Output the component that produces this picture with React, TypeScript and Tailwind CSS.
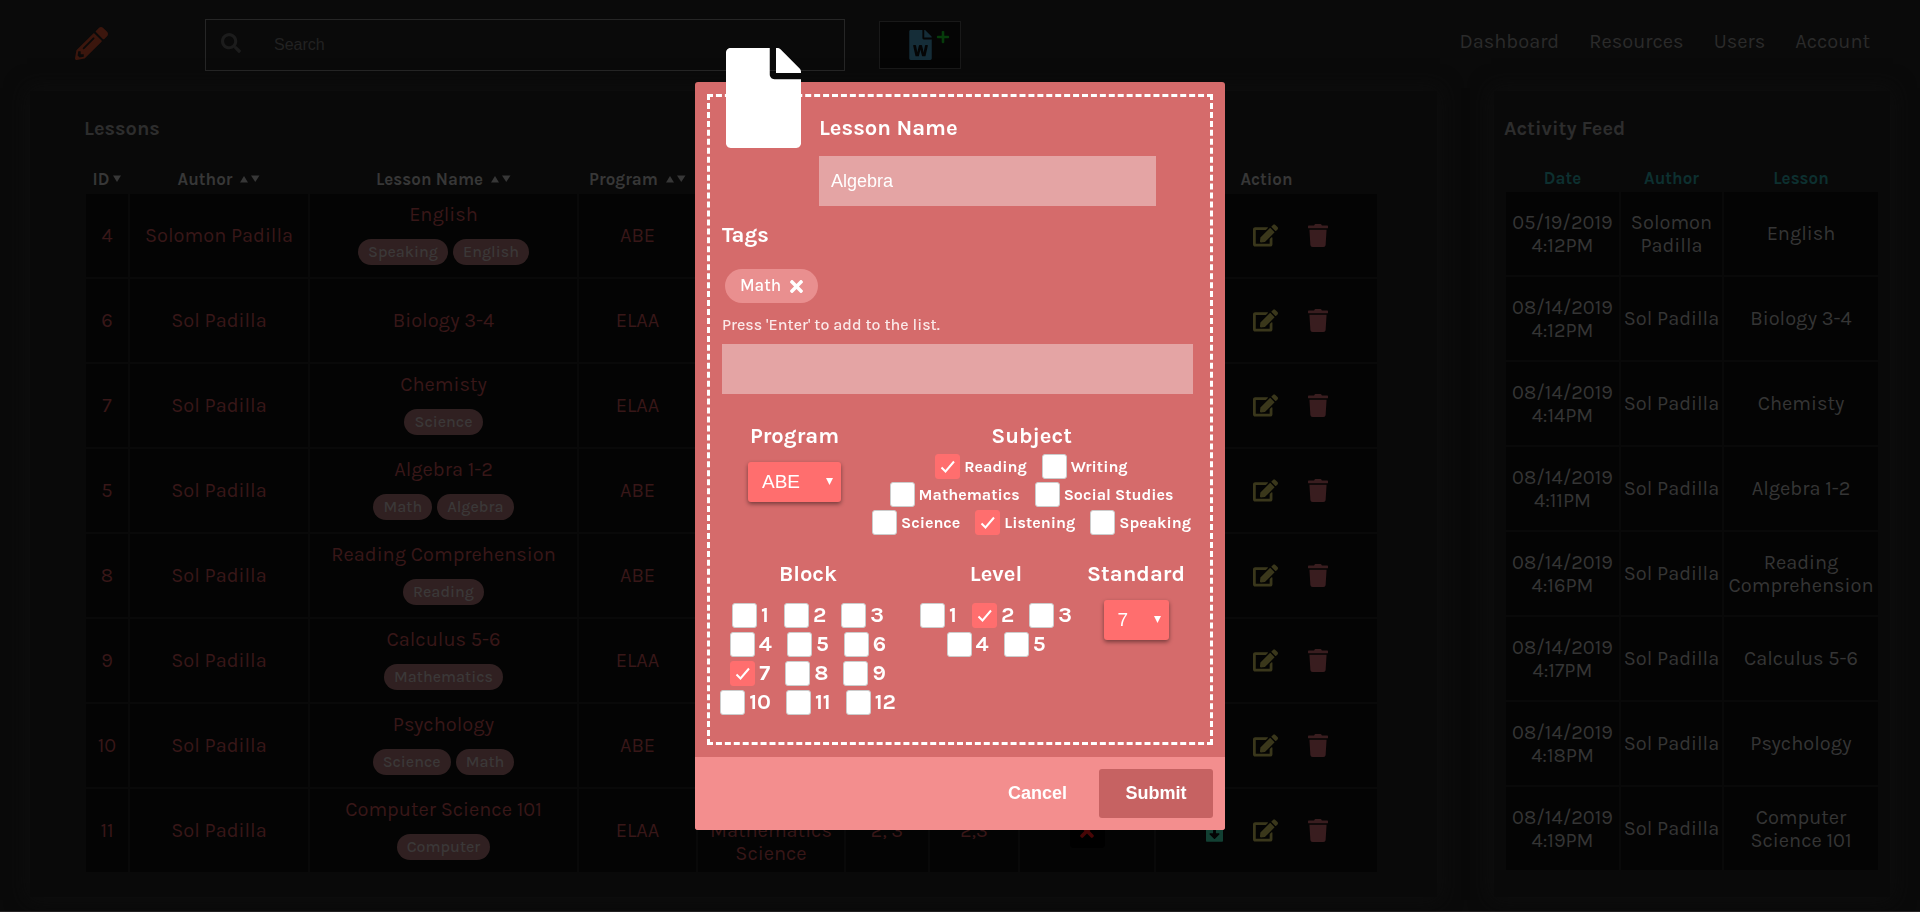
import { useState } from "react";
import {
  FaEdit,
  FaFile,
  FaFileDownload,
  FaFileWord,
  FaPencilAlt,
  FaPlus,
  FaSearch,
  FaTimes,
  FaTrash,
} from "react-icons/fa";

type Lesson = { id: number; author: string; name: string; tags: string[]; program: string };

const lessons: Lesson[] = [
  { id: 4, author: "Solomon Padilla", name: "English", tags: ["Speaking", "English"], program: "ABE" },
  { id: 6, author: "Sol Padilla", name: "Biology 3-4", tags: [], program: "ELAA" },
  { id: 7, author: "Sol Padilla", name: "Chemisty", tags: ["Science"], program: "ELAA" },
  { id: 5, author: "Sol Padilla", name: "Algebra 1-2", tags: ["Math", "Algebra"], program: "ABE" },
  { id: 8, author: "Sol Padilla", name: "Reading Comprehension", tags: ["Reading"], program: "ABE" },
  { id: 9, author: "Sol Padilla", name: "Calculus 5-6", tags: ["Mathematics"], program: "ELAA" },
  { id: 10, author: "Sol Padilla", name: "Psychology", tags: ["Science", "Math"], program: "ABE" },
  { id: 11, author: "Sol Padilla", name: "Computer Science 101", tags: ["Computer"], program: "ELAA" },
];

const feed = [
  ["05/19/2019", "4:12PM", "Solomon Padilla", "English"],
  ["08/14/2019", "4:12PM", "Sol Padilla", "Biology 3-4"],
  ["08/14/2019", "4:14PM", "Sol Padilla", "Chemisty"],
  ["08/14/2019", "4:11PM", "Sol Padilla", "Algebra 1-2"],
  ["08/14/2019", "4:16PM", "Sol Padilla", "Reading Comprehension"],
  ["08/14/2019", "4:17PM", "Sol Padilla", "Calculus 5-6"],
  ["08/14/2019", "4:18PM", "Sol Padilla", "Psychology"],
  ["08/14/2019", "4:19PM", "Sol Padilla", "Computer Science 101"],
];

const subjectRows = [
  ["Reading", "Writing"],
  ["Mathematics", "Social Studies"],
  ["Science", "Listening", "Speaking"],
];
const blockRows = [
  ["1", "2", "3"],
  ["4", "5", "6"],
  ["7", "8", "9"],
  ["10", "11", "12"],
];
const levelRows = [
  ["1", "2", "3"],
  ["4", "5"],
];

function Sort({ both = true }: { both?: boolean }) {
  return (
    <svg viewBox={both ? "0 0 20 8" : "0 0 8 8"} className={both ? "h-2 w-5 fill-current" : "h-2 w-2 fill-current"} aria-hidden="true">
      {both && <path d="M0 7.5 4 1l4 6.500z" />}
      <path d={both ? "M11 .5h8.500L15.250 7z" : "M0 .5h8L4 7z"} />
    </svg>
  );
}

function Header() {
  return (
    <header className="flex h-[91px] items-center pr-[50px] pb-px pl-[75px]">
      <a href="#home" aria-label="Home" className="-mt-1">
        <FaPencilAlt className="h-[33px] w-[33px] text-[#3b160d]" />
      </a>
      <div className="ml-[97px] flex h-[52px] w-[640px] items-center border border-[#262626] pl-[15px]">
        <FaSearch className="mb-1 h-5 w-5 shrink-0 text-[#1c1c1c]" />
        <input
          type="search"
          aria-label="Search"
          placeholder="Search"
          className="ml-[33px] h-full flex-1 bg-transparent font-['Liberation_Sans',sans-serif] text-[16px] text-[#333] outline-none placeholder:text-[#222]"
        />
      </div>
      <button type="button" aria-label="Add lesson" className="ml-[34px] flex h-[48px] w-[82px] items-start gap-1 border border-[#191919] bg-[#050505] pt-2 pl-[29px]">
        <FaFileWord className="h-[30px] w-[23px] text-[#152d38]" />
        <FaPlus className="h-[14px] w-[14px] text-[#063c0b]" />
      </button>
      <nav className="mb-[6px] ml-auto flex gap-[30px] text-[20px] text-[#2b2b2b]">
        <a href="#dashboard">Dashboard</a>
        <a href="#resources">Resources</a>
        <a href="#users">Users</a>
        <a href="#account">Account</a>
      </nav>
    </header>
  );
}

function LessonsTable() {
  return (
    <section className="flex-1 bg-[#090909] pt-6 pr-[58px] pb-[23px] pl-[54px] shadow-[0_0_20px_3px_#0e0e0e]">
      <h2 className="text-[20px] leading-7 font-bold text-[#2d2d2d]">Lessons</h2>
      <table className="mt-[21px] w-full table-fixed border-separate border-spacing-[2px] text-center text-[20px] leading-[23px] text-[#381718]">
        <colgroup>
          <col className="w-[42px]" />
          <col className="w-[178px]" />
          <col />
          <col className="w-[117px]" />
          <col className="w-[146px]" />
          <col className="w-[82px]" />
          <col className="w-[88px]" />
          <col className="w-[134px]" />
          <col className="w-[221px]" />
        </colgroup>
        <thead>
          <tr className="h-[26px] text-[17px] text-[#373737]">
            <th className="p-0"><span className="flex items-center justify-center gap-1">ID <Sort both={false} /></span></th>
            <th className="p-0"><span className="flex items-center justify-center gap-2">Author <Sort /></span></th>
            <th className="p-0"><span className="flex items-center justify-center gap-2">Lesson Name <Sort /></span></th>
            <th className="p-0"><span className="flex items-center justify-center gap-2">Program <Sort /></span></th>
            <td className="p-0" colSpan={4} />
            <th className="p-0">Action</th>
          </tr>
        </thead>
        <tbody>
          {lessons.map((l) => {
            const last = l.id === 11;
            return (
              <tr key={l.id} className="h-[83px] *:bg-[#040404] *:p-0">
                <td>{l.id}</td>
                <td>{l.author}</td>
                <td>
                  <div className={l.tags.length ? "pb-[5px]" : ""}>{l.name}</div>
                  {l.tags.length > 0 && (
                    <div className="mt-2 mb-1 flex justify-center gap-[5px]">
                      {l.tags.map((t) => (
                        <span key={t} className="rounded-full bg-[#302021] px-[10px] text-[16px] leading-[26px] font-medium text-[#3b3838]">{t}</span>
                      ))}
                    </div>
                  )}
                </td>
                <td>{l.program}</td>
                <td>{last && <>Reading<br />Mathematics<br />Science</>}</td>
                <td>{last && "2, 3"}</td>
                <td>{last && "2,3"}</td>
                <td>
                  {last && (
                    <span className="inline-flex h-[35px] w-[35px] items-center justify-center rounded bg-black align-middle">
                      <FaTimes className="h-5 w-[14px] text-[#480606]" />
                    </span>
                  )}
                </td>
                <td>
                  <div className="flex items-center justify-center gap-[30px] pb-px">
                    <button type="button" aria-label="Download"><FaFileDownload className="h-[23px] w-[17px] text-[#124033]" /></button>
                    <button type="button" aria-label="Edit"><FaEdit className="h-[23px] w-[25px] text-[#3a371b]" /></button>
                    <button type="button" aria-label="Delete"><FaTrash className="h-[23px] w-5 text-[#391d1f]" /></button>
                  </div>
                </td>
              </tr>
            );
          })}
        </tbody>
      </table>
    </section>
  );
}

function ActivityFeed() {
  return (
    <section className="w-[396px] bg-[#090909] px-[10px] pt-6 shadow-[0_0_20px_3px_#0e0e0e]">
      <h2 className="text-[20px] leading-7 font-bold text-[#2d2d2d]">Activity Feed</h2>
      <table className="mt-[21px] w-full table-fixed border-separate border-spacing-[2px] text-center text-[20px] leading-[23px] text-[#353535]">
        <colgroup>
          <col className="w-[113px]" />
          <col className="w-[101px]" />
          <col />
        </colgroup>
        <thead>
          <tr className="h-6 text-[17px] text-[#0d3030] *:p-0">
            <th>Date</th>
            <th>Author</th>
            <th>Lesson</th>
          </tr>
        </thead>
        <tbody>
          {feed.map(([date, time, author, lesson]) => (
            <tr key={date + time} className="h-[83px] *:bg-[#040404] *:p-0">
              <td>{date}<br />{time}</td>
              <td>{author}</td>
              <td>{lesson}</td>
            </tr>
          ))}
        </tbody>
      </table>
    </section>
  );
}

function Check({ label, checked }: { label: string; checked: boolean }) {
  const [on, setOn] = useState(checked);
  return (
    <label className="flex items-center gap-1">
      <span className="relative h-[25px] w-[25px]">
        <input
          type="checkbox"
          checked={on}
          onChange={() => setOn(!on)}
          className="peer block h-[25px] w-[25px] appearance-none rounded-[3px] border border-[#ccc] bg-white checked:border-[#ff6e6e] checked:bg-[#ff6e6e]"
        />
        <svg viewBox="0 0 25 25" className="pointer-events-none absolute inset-0 hidden peer-checked:block" fill="none" stroke="#fff" strokeWidth="2">
          <path d="M6.500 13.500 10.500 17.500 19 7.500" />
        </svg>
      </span>
      {label}
    </label>
  );
}

function CheckRows({ rows, on }: { rows: string[][]; on: string[] }) {
  return rows.map((row) => (
    <div key={row[0]} className="flex justify-center gap-[15px] leading-[25px] whitespace-nowrap">
      {row.map((r) => (
        <Check key={r} label={r} checked={on.includes(r)} />
      ))}
    </div>
  ));
}

function Picker({ id, options, wide }: { id: string; options: string[]; wide?: boolean }) {
  return (
    <div className={wide ? "relative mt-3 w-[93px]" : "relative mt-3 w-[65px]"}>
      <select
        id={id}
        className="block h-10 w-full appearance-none rounded-[3px] bg-[#ff6e6e] pl-[14px] font-['Liberation_Sans',sans-serif] text-[19px] text-white shadow-[0_2px_4px_rgba(0,0,0,0.45)] outline-none"
      >
        {options.map((o) => (
          <option key={o}>{o}</option>
        ))}
      </select>
      <svg viewBox="0 0 8 8" className="pointer-events-none absolute top-4 right-2 h-[7px] w-[7px] fill-white">
        <path d="M0 0h8L4 8z" />
      </svg>
    </div>
  );
}

function LessonDialog() {
  return (
    <div className="fixed inset-0 flex items-center justify-center">
      <form
        role="dialog"
        aria-label="Edit lesson"
        onSubmit={(e) => e.preventDefault()}
        className="relative w-[530px] rounded-[3px] bg-[#d56b6b] text-white"
      >
        <FaFile className="absolute -top-[34px] left-[31px] h-[100px] w-[75px]" />
        <div className="p-3">
          <div className="border-[3px] border-dashed border-white pt-[17px] pr-[17px] pb-[27px] pl-3">
            <div className="ml-[97px]">
              <label htmlFor="lesson" className="block text-[22px] leading-7 font-bold">Lesson Name</label>
              <input
                id="lesson"
                defaultValue="Algebra"
                className="mt-[14px] block h-[50px] w-[337px] bg-[#e4a4a4] px-3 font-['Liberation_Sans',sans-serif] text-[18px] outline-none"
              />
            </div>
            <label htmlFor="tags" className="mt-[15px] block text-[22px] leading-7 font-bold">Tags</label>
            <div className="mt-5 ml-[3px] flex">
              <span className="flex h-[34px] items-center gap-[9px] rounded-full bg-[#e98f8f] px-[15px] text-[17px] font-medium">
                Math
                <button type="button" aria-label="Remove Math"><FaTimes className="h-[19px] w-[13px]" /></button>
              </span>
            </div>
            <p className="mt-3 text-[16px] leading-5 font-medium text-[#fbe9e9]">Press 'Enter' to add to the list.</p>
            <input id="tags" className="mt-[9px] block h-[50px] w-full bg-[#e4a4a4] px-3 font-['Liberation_Sans',sans-serif] text-[18px] outline-none" />
            <div className="mt-7 grid grid-cols-[145px_1fr] gap-x-[3px]">
              <div className="flex flex-col items-center">
                <label htmlFor="program" className="text-[22px] leading-7 font-bold">Program</label>
                <Picker id="program" options={["ABE", "ELAA"]} wide />
              </div>
              <fieldset className="min-w-0">
                <legend className="mx-auto text-[22px] leading-7 font-bold">Subject</legend>
                <div className="mt-1 flex flex-col items-center gap-[3px] text-[16px] font-bold">
                  <CheckRows rows={subjectRows} on={["Reading", "Listening"]} />
                </div>
              </fieldset>
            </div>
            <div className="mt-[25px] grid grid-cols-[172px_204px_76px]">
              <fieldset className="min-w-0">
                <legend className="mx-auto text-[22px] leading-7 font-bold">Block</legend>
                <div className="mt-[15px] flex flex-col items-center gap-1 text-[22px] font-bold">
                  <CheckRows rows={blockRows} on={["7"]} />
                </div>
              </fieldset>
              <fieldset className="min-w-0">
                <legend className="mx-auto text-[22px] leading-7 font-bold">Level</legend>
                <div className="mt-[15px] flex flex-col items-center gap-1 text-[22px] font-bold">
                  <CheckRows rows={levelRows} on={["2"]} />
                </div>
              </fieldset>
              <div className="flex flex-col items-center">
                <label htmlFor="standard" className="text-[22px] leading-7 font-bold">Standard</label>
                <Picker id="standard" options={["7", "8", "9"]} />
              </div>
            </div>
          </div>
        </div>
        <div className="flex justify-end rounded-b-[3px] bg-[#f38e8e] p-3 font-['Liberation_Sans',sans-serif] text-[18px] font-bold">
          <button type="button" className="h-[49px] px-8">Cancel</button>
          <button type="submit" className="h-[49px] w-[114px] rounded-[3px] bg-[#c66262]">Submit</button>
        </div>
      </form>
    </div>
  );
}

export default function App() {
  return (
    <div className="flex min-h-screen flex-col border-b border-[#262324] bg-[#0a0a0a] font-[Karla,Inter,sans-serif]">
      <Header />
      <main className="flex gap-[57px] px-[30px]">
        <LessonsTable />
        <ActivityFeed />
      </main>
      <LessonDialog />
    </div>
  );
}
